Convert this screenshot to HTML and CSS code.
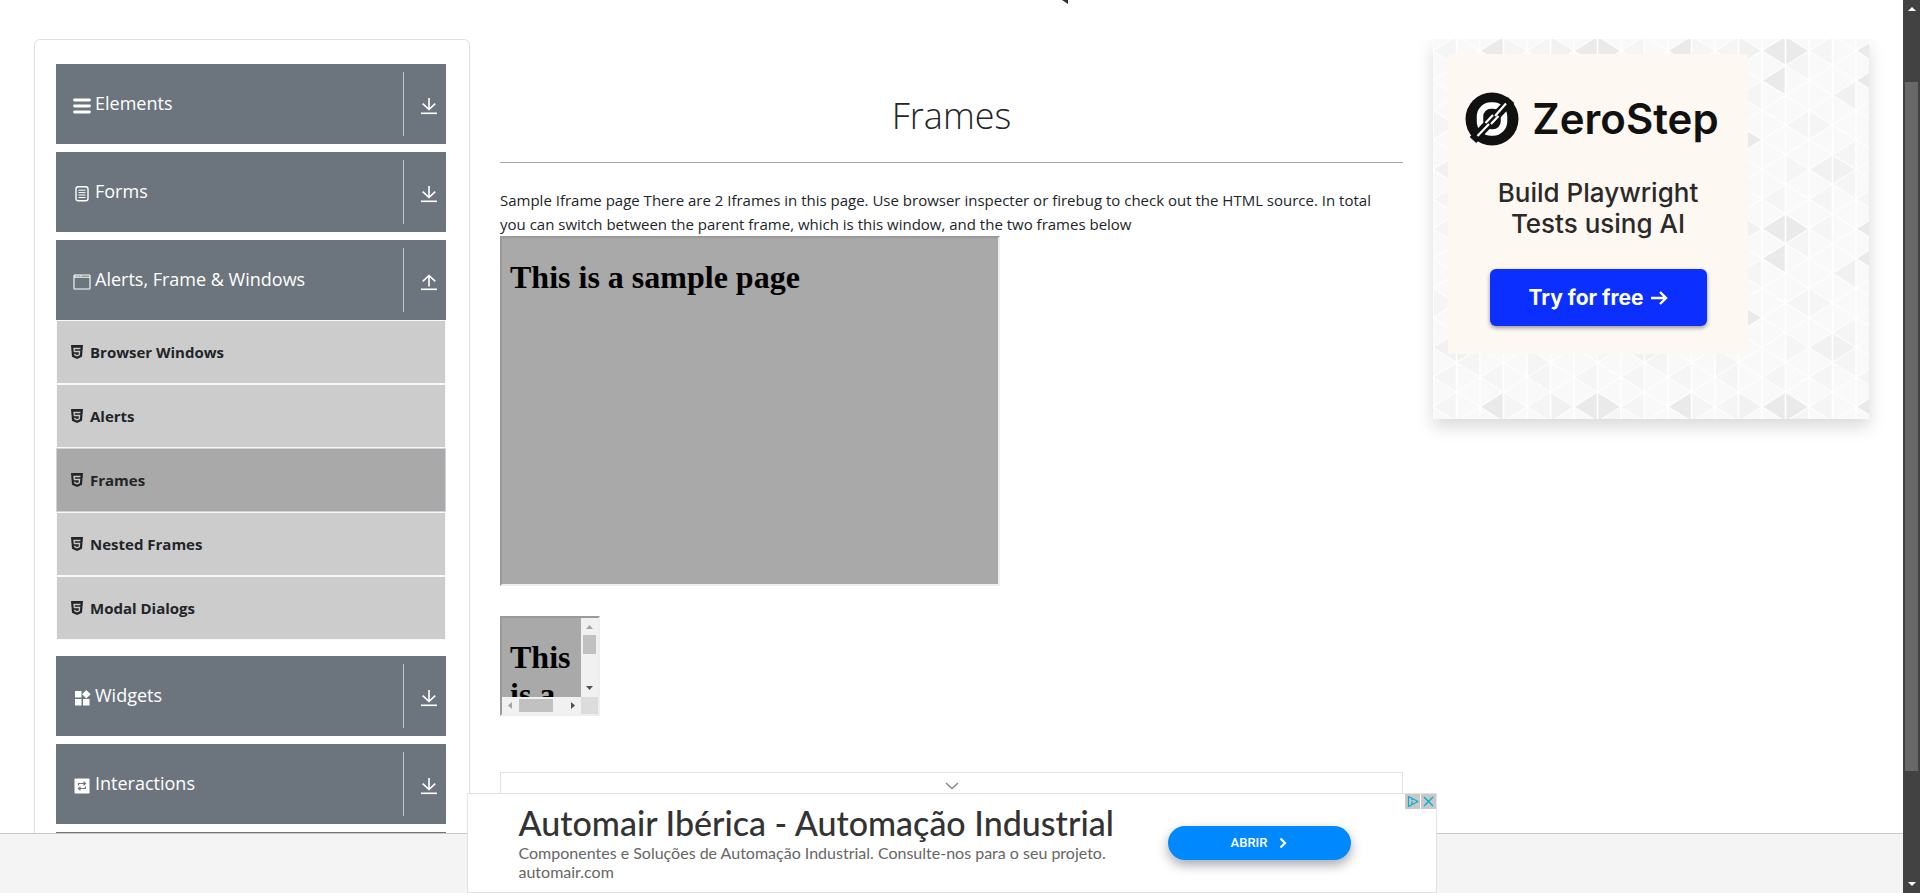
FILE: index.html
```html
<!DOCTYPE html>
<html lang="en">
<head>
<meta charset="utf-8">
<title>Frames</title>
<link rel="stylesheet" href="styles.css">
</head>
<body>
<svg class="defs" aria-hidden="true">
  <symbol id="i-menu" viewBox="0 0 18 18"><path d="M1.500 3h15M1.500 9h15M1.500 15h15" stroke="currentColor" stroke-width="2.800" stroke-linecap="round"/></symbol>
  <symbol id="i-form" viewBox="0 0 18 18" fill="none" stroke="currentColor"><rect x="3" y="1.800" width="12" height="14" rx="2.200" stroke-width="1.400"/><path d="M5.500 5.200h7M5.500 7.600h7M5.500 10h7M5.500 12.500h7" stroke-width="1"/></symbol>
  <symbol id="i-window" viewBox="0 0 18 18" fill="none" stroke="currentColor"><rect x="1" y="2" width="16" height="14" rx=".8" stroke-width="1.100"/><path d="M1 4.200h16" stroke-width="1"/><path d="M2 3h1.500M4.500 3h1.500M7 3h1.500" stroke-width="1"/></symbol>
  <symbol id="i-widgets" viewBox="0 0 18 18" fill="currentColor"><path d="M2 2h6.500v6.500H2zM2 10h6.500v6.500H2zM10 10h6.500v6.500H10zM13.300 1l4.300 4.300-4.300 4.300L9 5.300z"/></symbol>
  <symbol id="i-swap" viewBox="0 0 18 18"><rect x="1.500" y="1.500" width="15" height="15" rx=".8" fill="currentColor"/><path d="M5.500 8.500v-2h6M10.500 4.700l2 1.800-2 1.800M12.500 9.500v2h-6M7.500 9.700l-2 1.800 2 1.800" fill="none" stroke="#6c757d" stroke-width="1.200"/></symbol>
  <symbol id="i-down" viewBox="0 0 18 18" fill="none" stroke="currentColor" stroke-width="1.600"><path d="M9 1v11.500M2.700 6.700L9 12.500l6.300-5.800"/><path d="M1 16.300h16"/></symbol>
  <symbol id="i-up" viewBox="0 0 18 18" fill="none" stroke="currentColor" stroke-width="1.600"><path d="M9 13.500v-11M2.700 8.300L9 2.500l6.300 5.800"/><path d="M1 16.300h16"/></symbol>
  <symbol id="i-html" viewBox="0 0 12 14"><path d="M0 0h12l-1 11.800L6 14l-5-2.200z" fill="currentColor"/><path d="M9.400 3.500H3l.3 3h5.300l-.4 3.400L6 10.700l-2.200-.8-.1-1.200" fill="none" stroke="#c8c8c8" stroke-width="1.300"/></symbol>
</svg>
<div class="window">
  <div class="page">
    <header class="top"><svg class="logo-tip" viewBox="0 0 6 4"><path d="M0 0h6v4z" fill="#2f2f2f"/></svg></header>
    <main class="columns">
      <nav class="side">
        <button class="group" type="button"><svg><use href="#i-menu"/></svg><span>Elements</span><i><svg><use href="#i-down"/></svg></i></button>
        <button class="group" type="button"><svg><use href="#i-form"/></svg><span>Forms</span><i><svg><use href="#i-down"/></svg></i></button>
        <div>
          <button class="group" type="button"><svg><use href="#i-window"/></svg><span>Alerts, Frame &amp; Windows</span><i><svg><use href="#i-up"/></svg></i></button>
          <ul class="items">
            <li><a href="#"><svg><use href="#i-html"/></svg>Browser Windows</a></li>
            <li><a href="#"><svg><use href="#i-html"/></svg>Alerts</a></li>
            <li class="active"><a href="#"><svg><use href="#i-html"/></svg>Frames</a></li>
            <li><a href="#"><svg><use href="#i-html"/></svg>Nested Frames</a></li>
            <li><a href="#"><svg><use href="#i-html"/></svg>Modal Dialogs</a></li>
          </ul>
        </div>
        <button class="group" type="button"><svg><use href="#i-widgets"/></svg><span>Widgets</span><i><svg><use href="#i-down"/></svg></i></button>
        <button class="group" type="button"><svg><use href="#i-swap"/></svg><span>Interactions</span><i><svg><use href="#i-down"/></svg></i></button>
        <button class="group" type="button" aria-label="More"></button>
      </nav>
      <section class="content">
        <h1>Frames</h1>
        <p>Sample Iframe page There are 2 Iframes in this page. Use browser inspecter or firebug to check out the HTML source. In total you can switch between the parent frame, which is this window, and the two frames below</p>
        <div class="frame frame-large"><h2>This is a sample page</h2></div>
        <div class="frame frame-small">
          <div class="view"><h2>This is a sample page</h2></div>
          <svg class="bar-v" viewBox="0 0 17 79"><path fill="#f1f1f1" d="M0 0h17v79H0z"/><path fill="#a3a3a3" d="M5 11h7L8.500 7z"/><path fill="#c1c1c1" d="M2 17h13v19H2z"/><path fill="#505050" d="M5 68h7l-3.500 4z"/></svg>
          <svg class="bar-h" viewBox="0 0 79 17"><path fill="#f1f1f1" d="M0 0h79v17H0z"/><path fill="#a3a3a3" d="M10 5v7L6 8.500z"/><path fill="#c1c1c1" d="M17 2h34v13H17z"/><path fill="#505050" d="M69 5v7l4-3.500z"/></svg>
          <div class="corner"></div>
        </div>
        <div class="strip"><svg viewBox="0 0 14 8"><path d="M1 1l6 5.500L13 1" fill="none" stroke="#8a8a8a" stroke-width="1.600"/></svg></div>
      </section>
      <aside class="promo">
        <svg class="tiles" aria-hidden="true">
          <defs>
            <pattern id="tri" x="0" y="-3" width="188" height="178" patternUnits="userSpaceOnUse">
              <g transform="scale(23.5 14.8333)">
              <rect width="8" height="12" fill="#f9f9f9"/>
              <path fill="#f5f5f5" d="M0 1L1 0V2zM4 1L3 0V2zM4 1L5 0V2zM0 11L1 10V12zM4 11L5 10V12zM3 10L2 11L3 12zM7 2L8 1V3zM5 4L6 3V5zM1 6L0 5V7zM7 6L8 5V7zM3 8L4 7V9zM1 8L2 7V9zM5 10L4 9V11zM8 9L7 8V10zM6 11L7 10V12zM1 10L2 11V9z"/>
              <path fill="#f1f1f1" d="M1 4L2 3V5zM0 9L1 8L2 9L1 10zM5 0L6 1L5 2zM3 6L4 5V7z"/>
              <path fill="#eaeaea" d="M2 1L3 0V2zM6 1L7 0L8 1L7 2zM6 3L7 2V4zM2 3L3 2V4zM6 7L5 6V8z"/>
              <path fill="none" stroke="#fff" stroke-width=".07" d="M0 0V12M1 0V12M2 0V12M3 0V12M4 0V12M5 0V12M6 0V12M7 0V12M8 0V12M0 1L1 0M0 3L3 0M0 5L5 0M0 7L7 0M0 9L8 1M0 11L8 3M1 12L8 5M3 12L8 7M5 12L8 9M7 12L8 11M7 0L8 1M5 0L8 3M3 0L8 5M1 0L8 7M0 1L8 9M0 3L8 11M0 5L7 12M0 7L5 12M0 9L3 12M0 11L1 12"/>
              </g>
            </pattern>
          </defs>
          <rect width="100%" height="100%" fill="url(#tri)"/>
        </svg>
        <div class="zero">
          <div class="brand">
            <svg viewBox="0 0 54 54"><circle cx="27" cy="27" r="26.500" fill="#111"/><rect x="15" y="13.500" width="24" height="27" rx="11" fill="none" stroke="#fff" stroke-width="6.500"/><path d="M8 48L46 8" stroke="#111" stroke-width="9"/><path d="M12.500 44L24 32M30 24L41 11.500M20.500 31L28 23M26 32l7.500-8" stroke="#fff" stroke-width="2.200"/></svg>
            <strong>ZeroStep</strong>
          </div>
          <p>Build Playwright<br>Tests using AI</p>
          <a href="#">Try for free <svg viewBox="0 0 18 16"><path d="M1 8h15M10 2l6 6-6 6" fill="none" stroke="#fff" stroke-width="2.400"/></svg></a>
        </div>
      </aside>
    </main>
    <footer class="foot"></footer>
    <div class="banner">
      <div class="copy"><h3>Automair Ibérica - Automação Industrial</h3><p>Componentes e Soluções de Automação Industrial. Consulte-nos para o seu projeto.<br>automair.com</p></div>
      <a class="open" href="#">ABRIR <svg viewBox="0 0 8 12"><path d="M1.500 1.500L6 6l-4.500 4.500" fill="none" stroke="#fff" stroke-width="2.200"/></svg></a>
      <div class="choices">
        <button type="button" aria-label="Ad choices"><svg viewBox="0 0 15 15" fill="none" stroke="#00aecd" stroke-width="1.200"><path d="M3.500 5V2.500L13 7.500l-9.500 5V5" stroke-linejoin="round"/><path d="M7 7v3.500M7 4.800v1.200"/></svg></button>
        <button type="button" aria-label="Close ad"><svg viewBox="0 0 15 15"><path d="M3 3l9 9M12 3l-9 9" stroke="#00aecd" stroke-width="1.400"/></svg></button>
      </div>
    </div>
  </div>
  <div class="scroll">
    <svg viewBox="0 0 8 4"><path d="M0 4h8L4 0z" fill="#fff"/></svg>
    <div class="thumb"></div>
    <svg viewBox="0 0 8 4"><path d="M0 0h8L4 4z" fill="#fff"/></svg>
  </div>
</div>
</body>
</html>
```
FILE: styles.css
```css
* { box-sizing: border-box; }
body { margin: 0; background: #fff; color: #212529; font: 15px/24px "Open Sans", "Noto Sans", sans-serif; }
h1, h2, h3, p, ul { margin: 0; padding: 0; }
button { border: 0; font: inherit; }
a { color: inherit; text-decoration: none; }
svg { display: block; flex: none; }
.defs { position: absolute; width: 0; height: 0; }

.window { display: flex; height: 100vh; }
.page { position: relative; flex: 1; min-width: 0; display: flex; flex-direction: column; }
.top { flex: none; height: 39px; display: flex; justify-content: center; padding-left: 226px; }
.logo-tip { width: 6px; height: 4px; }
.columns { flex: 1; min-height: 0; overflow: hidden; overflow: clip; display: grid; grid-template-columns: 436fr 903fr 436fr; gap: 30px; padding: 0 34px; align-items: start; }
.foot { flex: none; height: 60px; background: #f4f4f4; border-top: 1px solid #c8c8c8; }

.side { display: flex; flex-direction: column; gap: 8px; padding: 24px 23px 24px 21px; border: 1px solid #dfdfdf; border-radius: 6px; }
.group { display: flex; align-items: center; gap: 4px; width: 100%; height: 80px; padding: 8px 8px 8px 17px; background: #6c757d; color: #fff; font-size: 18px; text-align: left; }
.group svg { width: 18px; height: 18px; margin-top: 3px; }
.group span { flex: 1; padding-bottom: 2px; }
.group i { display: flex; align-items: center; align-self: stretch; padding-left: 16px; border-left: 1px solid #c4c8cb; }
.items { list-style: none; margin-bottom: 8px; }
.items li { height: 64px; border: 1px solid #f8f9fa; background: #ccc; }
.items .active { background: #a9a9a9; border-color: #cfd2da; }
.items a { display: flex; align-items: center; gap: 7px; height: 100%; padding-left: 14px; font-size: 15px; font-weight: 700; }
.items svg { width: 12px; height: 14px; }

.content { display: flex; flex-direction: column; align-items: flex-start; }
.content h1 { width: 100%; padding: 50px 0 20px; border-bottom: 1px solid #a8a8a8; font-size: 36px; line-height: 53px; font-weight: 300; text-align: center; }
.content p { padding: 25px 16px 0 0; }
.frame { border: 2px inset #eee; background: #a9a9a9; overflow: hidden; color: #000; }
.frame h2 { margin: 21px 8px; font: 700 32px/37px "Liberation Serif", serif; }
.frame-large { width: 500px; height: 350px; }
.frame-small { display: grid; grid-template: 1fr 17px / 1fr 17px; width: 100px; height: 100px; margin-top: 30px; }
.view { min-height: 0; min-width: 0; height: 79px; overflow: hidden; }
.bar-v { width: 17px; height: 79px; }
.bar-h { width: 79px; height: 17px; }
.corner { background: #dcdcdc; }
.strip { display: flex; justify-content: center; width: 100%; height: 90px; margin-top: 56px; padding-top: 9px; border: 1px solid #e2e2e2; }
.strip svg { width: 14px; height: 8px; }

.promo { position: relative; height: 380px; padding: 15px; box-shadow: 0 8px 16px rgba(0, 0, 0, .15); }
.tiles { position: absolute; inset: 0; width: 100%; height: 100%; }
.zero { position: relative; display: flex; flex-direction: column; align-items: center; width: 300px; height: 300px; padding-top: 38px; background: #fef8f2; font-family: Inter, sans-serif; }
.brand { display: flex; align-items: center; gap: 13px; padding-right: 12px; color: #111; }
.brand svg { width: 54px; height: 54px; }
.brand strong { font-size: 42px; line-height: 54px; font-weight: 600; }
.zero p { padding: 0; margin-top: 31px; color: #2c2a29; font-size: 26px; line-height: 31px; font-weight: 500; text-align: center; }
.zero a { display: flex; align-items: center; justify-content: center; gap: 6px; width: 217px; height: 57px; margin-top: 30px; border-radius: 6px; background: #0a2fff; box-shadow: 0 2px 4px rgba(0, 0, 0, .4); color: #fff; font-size: 21px; font-weight: 700; }
.zero a svg { width: 18px; height: 16px; }

.banner { position: absolute; left: 50%; bottom: 0; transform: translateX(-50%); display: flex; align-items: center; width: 970px; height: 100px; padding: 0 85px 0 51px; border: 1px solid #e2e2e2; background: #fff; font-family: Lato, sans-serif; }
.copy { flex: 1; padding-bottom: 3px; white-space: nowrap; }
.copy h3 { color: #333; font-size: 34px; line-height: 40px; font-weight: 500; }
.copy p { color: #666; font-size: 16px; line-height: 19px; }
.open { display: flex; align-items: center; justify-content: center; gap: 12px; width: 183px; height: 34px; border-radius: 17px; background: #08f; box-shadow: 0 5px 12px rgba(0, 0, 30, .35); color: #fff; font: 500 13px/20px Roboto, sans-serif; }
.open svg { width: 8px; height: 12px; }
.choices { position: absolute; top: 0; right: 0; display: flex; gap: 1px; }
.choices button { width: 15px; height: 15px; padding: 0; background: #c8c8c8; }

.scroll { flex: none; display: flex; flex-direction: column; align-items: center; width: 17px; padding: 7px 0; background: #424242; }
.scroll svg { width: 8px; height: 4px; }
.thumb { flex: none; width: 13px; height: 78.400%; margin: 71px 0 auto; background: #686868; }
```
